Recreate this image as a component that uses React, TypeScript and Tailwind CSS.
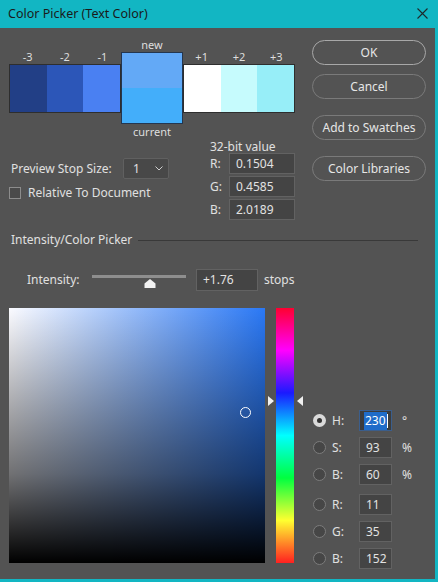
import React from 'react';

const FONT = { fontFamily: '"Noto Sans", "Open Sans", Arial, sans-serif' };

const LEFT_SWATCHES = [
  { label: '-3', color: 'bg-[#223f86]' },
  { label: '-2', color: 'bg-[#2c56b8]' },
  { label: '-1', color: 'bg-[#4a80f2]' },
];
const RIGHT_SWATCHES = [
  { label: '+1', color: 'bg-[#ffffff]' },
  { label: '+2', color: 'bg-[#c6fbfd]' },
  { label: '+3', color: 'bg-[#97eef8]' },
];

function SwatchGroup({ items }: { items: { label: string; color: string }[] }) {
  return (
    <div className="mt-[13px] flex w-[112px] flex-col">
      <div className="flex h-[14px]">
        {items.map((s) => (
          <span key={s.label} className="flex-1 text-center text-[11px] leading-[14px] text-[#dedede]">
            {s.label}
          </span>
        ))}
      </div>
      <div className="flex h-[49px] border border-[#2e2e2e]">
        {items.map((s) => (
          <div key={s.label} className={`flex-1 ${s.color}`} />
        ))}
      </div>
    </div>
  );
}

function Field({ value, className = '' }: { value: string; className?: string }) {
  return (
    <div
      className={`flex items-center border border-[#626262] bg-[#444444] pl-[6px] text-[12px] text-[#e2e2e2] ${className}`}
    >
      {value}
    </div>
  );
}

function PillButton({ children, primary }: { children: React.ReactNode; primary?: boolean }) {
  return (
    <div
      className={`flex h-[25px] items-center justify-center rounded-full text-[12px] text-[#e6e6e6] ${
        primary ? 'border-[1.5px] border-[#a8a8a8]' : 'border border-[#7a7a7a]'
      }`}
    >
      {children}
    </div>
  );
}

function Radio({ checked }: { checked?: boolean }) {
  if (checked) {
    return (
      <div className="flex h-[13px] w-[13px] items-center justify-center rounded-full bg-[#dadada]">
        <div className="h-[5px] w-[5px] rounded-full bg-[#333333]" />
      </div>
    );
  }
  return <div className="h-[13px] w-[13px] rounded-full border border-[#7c7c7c] bg-[#464646]" />;
}

type Row = { key: string; label: string; value: string; unit?: string; checked?: boolean; gap: string };

const ROWS: Row[] = [
  { key: 'h', label: 'H:', value: '230', unit: '°', checked: true, gap: 'mt-0' },
  { key: 's', label: 'S:', value: '93', unit: '%', gap: 'mt-[6px]' },
  { key: 'bv', label: 'B:', value: '60', unit: '%', gap: 'mt-[6px]' },
  { key: 'r', label: 'R:', value: '11', gap: 'mt-[9px]' },
  { key: 'g', label: 'G:', value: '35', gap: 'mt-[6px]' },
  { key: 'b', label: 'B:', value: '152', gap: 'mt-[6px]' },
];

export default function App() {
  return (
    <div className="flex h-[582px] w-[438px] flex-col bg-[#12b6c3]" style={FONT}>
      {/* title bar */}
      <div className="flex h-[28px] shrink-0 items-center justify-between pl-[8px] pr-[10px]">
        <span className="text-[12.5px] text-[#1a1a1a]">Color Picker (Text Color)</span>
        <svg width="11" height="11" viewBox="0 0 11 11" className="mt-[-2px]">
          <path d="M0.5 0.5 L10.5 10.5 M10.5 0.5 L0.5 10.5" stroke="#1d2a2c" strokeWidth="1.1" />
        </svg>
      </div>

      <div className="mb-[3px] mr-[3px] flex flex-1 flex-col bg-[#535353] text-[12px] text-[#e0e0e0]">
        {/* top area */}
        <div className="flex">
          <div className="flex w-[300px] flex-col">
            <div className="flex items-start pl-[9px] pt-[9px]">
              <SwatchGroup items={LEFT_SWATCHES} />
              <div className="flex w-[62px] flex-col">
                <span className="h-[15px] text-center text-[11px] leading-[15px] text-[#dedede]">new</span>
                <div className="flex h-[72px] flex-col border border-[#24364f]">
                  <div className="flex-1 bg-[#63a9f6]" />
                  <div className="flex-1 bg-[#43aefa]" />
                </div>
                <span className="h-[15px] text-center text-[11px] leading-[15px] text-[#dedede]">current</span>
              </div>
              <SwatchGroup items={RIGHT_SWATCHES} />
            </div>

            <div className="mt-[1px] flex">
              <div className="flex w-[210px] flex-col">
                <div className="mt-[18px] flex items-center pl-[11px]">
                  <span className="w-[112px] shrink-0">Preview Stop Size:</span>
                  <div className="flex h-[21px] w-[46px] items-center justify-between rounded-[2px] border border-[#606060] bg-[#484848] pl-[9px] pr-[5px]">
                    <span>1</span>
                    <svg width="8" height="5" viewBox="0 0 8 5">
                      <path d="M0.5 0.5 L4 4 L7.5 0.5" fill="none" stroke="#cfcfcf" strokeWidth="1" />
                    </svg>
                  </div>
                </div>
                <div className="mt-[5px] flex items-center pl-[9px]">
                  <div className="h-[12px] w-[12px] border border-[#8c8c8c] bg-[#4a4a4a]" />
                  <span className="ml-[7px]">Relative To Document</span>
                </div>
              </div>
              <div className="flex flex-col">
                <span className="h-[13px] leading-[13px]">32-bit value</span>
                {[
                  ['R:', '0.1504'],
                  ['G:', '0.4585'],
                  ['B:', '2.0189'],
                ].map(([l, v], i) => (
                  <div key={l} className={`flex items-center ${i ? 'mt-[2px]' : ''}`}>
                    <span className="w-[19px]">{l}</span>
                    <Field value={v} className="h-[21px] w-[66px]" />
                  </div>
                ))}
              </div>
            </div>
          </div>

          <div className="ml-[12px] mt-[12px] flex w-[114px] flex-col">
            <PillButton primary>OK</PillButton>
            <div className="mt-[9px]">
              <PillButton>Cancel</PillButton>
            </div>
            <div className="mt-[16px]">
              <PillButton>Add to Swatches</PillButton>
            </div>
            <div className="mt-[16px]">
              <PillButton>Color Libraries</PillButton>
            </div>
          </div>
        </div>

        {/* section header */}
        <div className="mt-[13px] flex h-[14px] items-center pl-[11px] pr-[17px]">
          <span>Intensity/Color Picker</span>
          <div className="ml-[6px] h-px flex-1 bg-[#393939]" />
        </div>

        {/* intensity */}
        <div className="mt-[22px] flex h-[22px] items-center pl-[27px]">
          <span className="w-[65px]">Intensity:</span>
          <div className="relative h-[22px] w-[94px]">
            <div className="absolute left-0 right-0 top-[6px] h-[3px] bg-[#8e8e8e]" />
            <svg width="12" height="9" viewBox="0 0 12 9" className="absolute left-[52px] top-[10px]">
              <path d="M6 0 L11.5 4.5 L11.5 9 L0.5 9 L0.5 4.5 Z" fill="#f2f2f2" />
            </svg>
          </div>
          <Field value="+1.76" className="ml-[10px] h-[22px] w-[62px]" />
          <span className="ml-[6px]">stops</span>
        </div>

        {/* picker */}
        <div className="mt-[17px] flex pl-[9px]">
          <div className="relative h-[255px] w-[256px] bg-[linear-gradient(to_right,#fbfbff,#2a78f5)]">
            <div className="h-full w-full bg-[linear-gradient(to_top,#000_0%,rgba(0,0,0,0.55)_35%,rgba(0,0,0,0)_100%)]" />
            <div className="absolute left-[231px] top-[99px] h-[11px] w-[11px] rounded-full border border-white" />
          </div>
          <div className="relative ml-[11px] h-[255px] w-[18px] bg-[linear-gradient(to_bottom,#ff0030,#ff00ff,#1a1aff,#00ffff,#00ff40,#ffff30,#ff2020)]">
            <svg width="6" height="10" viewBox="0 0 6 10" className="absolute left-[-8px] top-[88px]">
              <path d="M0 0 L6 5 L0 10 Z" fill="#f0f0f0" />
            </svg>
            <svg width="6" height="10" viewBox="0 0 6 10" className="absolute right-[-9px] top-[88px]">
              <path d="M6 0 L0 5 L6 10 Z" fill="#f0f0f0" />
            </svg>
          </div>
          <div className="ml-[19px] mt-[102px] flex flex-col">
            {ROWS.map((r) => (
              <div key={r.key} className={`flex h-[21px] items-center ${r.gap}`}>
                <Radio checked={r.checked} />
                <span className="ml-[6px] w-[27px]">{r.label}</span>
                {r.checked ? (
                  <div className="flex h-[21px] w-[33px] items-center border border-[#3b5e8c] bg-[#3c3c3c] pl-[4px]">
                    <span className="bg-[#1f6cc9] px-[1px] text-white">{r.value}</span>
                    <span className="h-[14px] w-px bg-white" />
                  </div>
                ) : (
                  <Field value={r.value} className="h-[21px] w-[33px]" />
                )}
                {r.unit && <span className="ml-[10px]">{r.unit}</span>}
              </div>
            ))}
          </div>
        </div>
      </div>
    </div>
  );
}
